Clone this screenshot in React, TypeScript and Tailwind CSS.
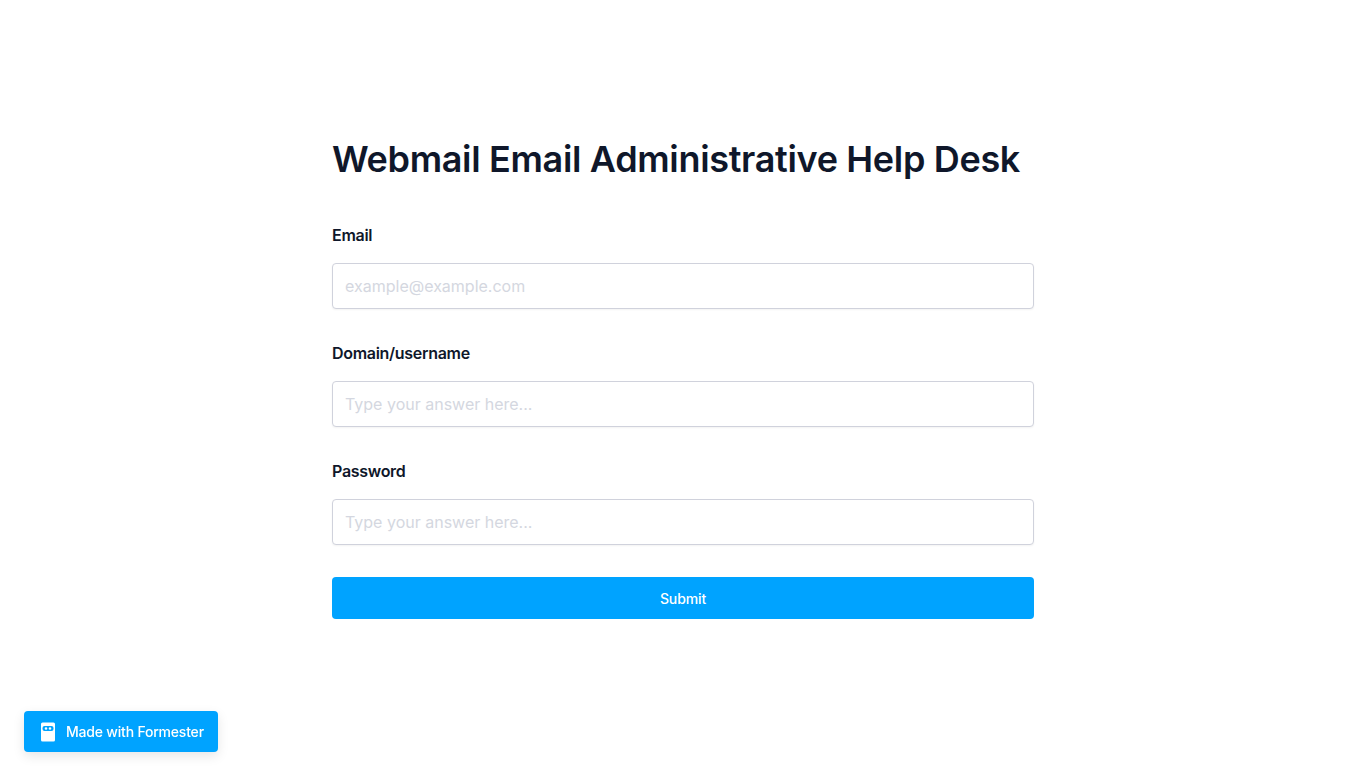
import React from 'react';

const fields = [
  { label: 'Email', placeholder: 'example@example.com', type: 'email' },
  { label: 'Domain/username', placeholder: 'Type your answer here...', type: 'text' },
  { label: 'Password', placeholder: 'Type your answer here...', type: 'password' },
];

function FormesterLogo() {
  return (
    <svg width="16" height="20" viewBox="0 0 16 20" aria-hidden="true">
      <rect x="1" y="0.5" width="14" height="19" rx="1.5" fill="#ffffff" />
      <rect x="2.5" y="4" width="11" height="5" rx="2" fill="#00a3ff" />
      <circle cx="6" cy="6.5" r="1.2" fill="#ffffff" />
      <circle cx="10" cy="6.5" r="1.2" fill="#ffffff" />
    </svg>
  );
}

export default function App() {
  return (
    <div className="min-h-[768px] bg-white font-['Inter',sans-serif]">
      <div className="flex justify-center pt-[134px]">
        <form className="w-[702px]">
          <h1 className="text-[36px] leading-[50px] font-semibold tracking-[-0.33px] text-[#0f172a] whitespace-nowrap">
            Webmail Email Administrative Help Desk
          </h1>
          <div className="mt-[39px] flex flex-col gap-[32px]">
            {fields.map((field) => (
              <div key={field.label}>
                <label className="block text-[16px] leading-[24px] font-semibold tracking-[-0.3px] text-[#0f172a]">{field.label}</label>
                <input
                  type={field.type}
                  placeholder={field.placeholder}
                  className="mt-[16px] block h-[46px] w-full rounded-[4px] border border-[#d0d2dc] bg-white px-[12px] text-[16px] outline-none shadow-[0_1px_2px_rgba(0,0,0,0.05)] placeholder:text-[#d4d7e0]"
                />
              </div>
            ))}
          </div>
          <button
            type="button"
            className="mt-[32px] block h-[42px] w-full rounded-[4px] bg-[#00a3ff] text-[14px] font-medium tracking-[-0.1px] text-white"
          >
            Submit
          </button>
        </form>
      </div>
      <a className="fixed bottom-[16px] left-[24px] flex h-[41px] w-[194px] items-center gap-[10px] rounded-[4px] bg-[#00a3ff] pl-[16px] text-[14px] font-medium tracking-[-0.2px] text-white shadow-[0_4px_12px_rgba(0,0,0,0.1)]">
        <FormesterLogo />
        <span className="whitespace-nowrap">Made with Formester</span>
      </a>
    </div>
  );
}
